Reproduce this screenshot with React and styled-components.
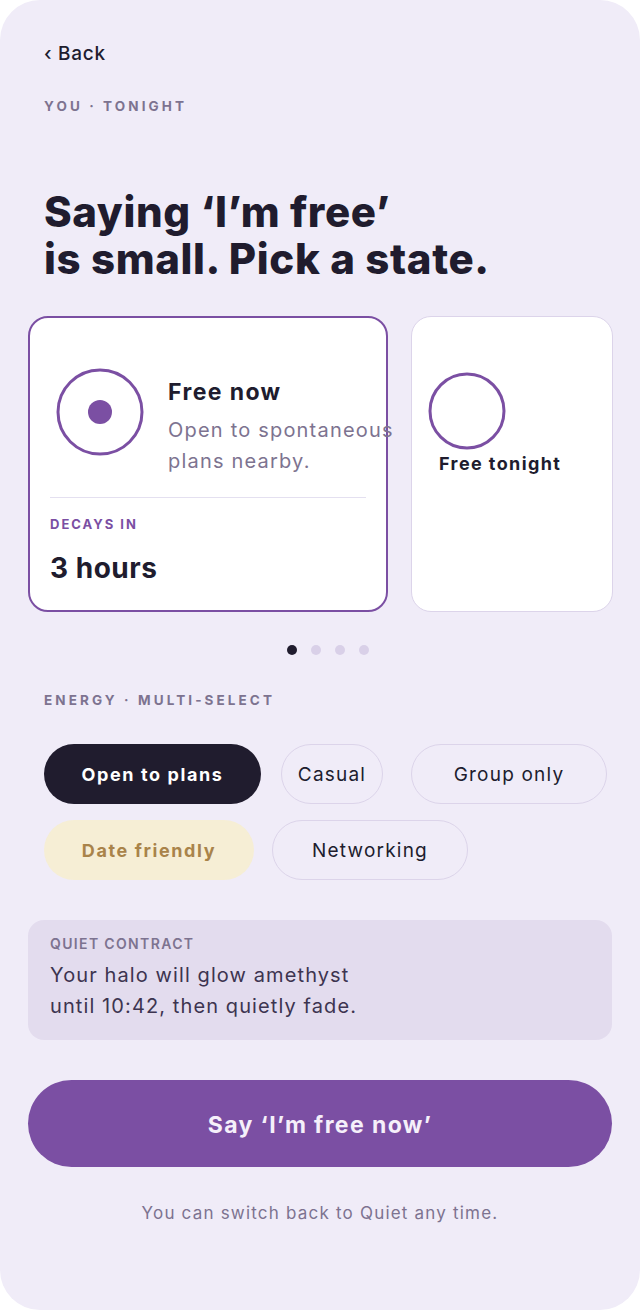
import React from 'react'
import styled, { createGlobalStyle } from 'styled-components'

const GlobalStyle = createGlobalStyle`
  body {
    margin: 0;
    background: #ffffff;
    font-family: Inter, "Noto Sans", sans-serif;
  }
  * { box-sizing: border-box; }
`

const PURPLE = '#7b4fa3'
const INK = '#201c2e'
const MUTED = '#7d7390'
const LINE = '#dcd4ea'

const Screen = styled.div`
  width: 640px;
  min-height: 1310px;
  background: #f0ecf8;
  border-radius: 40px;
  padding: 42px 28px 40px;
  display: flex;
  flex-direction: column;
`

const BackLink = styled.div`
  padding-left: 16px;
  font-size: 19px;
  line-height: 23px;
  font-weight: 500;
  letter-spacing: 0.7px;
  color: ${INK};
`

const Eyebrow = styled.div`
  padding-left: 16px;
  margin-top: ${p => p.$mt || 0}px;
  font-size: 13.5px;
  line-height: 16px;
  font-weight: 700;
  letter-spacing: 3.1px;
  color: ${MUTED};
`

const Heading = styled.h1`
  margin: 74px 0 0;
  padding-left: 16px;
  font-size: 42px;
  line-height: 47px;
  font-weight: 800;
  letter-spacing: 0.6px;
  color: ${INK};
`

const CardRow = styled.div`
  margin-top: 34px;
  display: flex;
  gap: 23px;
  align-items: flex-start;
`

const Card = styled.div`
  flex: none;
  width: ${p => p.$w}px;
  height: 296px;
  background: #ffffff;
  border: ${p => (p.$active ? `2px solid ${PURPLE}` : `1px solid ${LINE}`)};
  border-radius: 20px;
  padding: ${p => p.$pad};
  display: flex;
  flex-direction: column;
`

const TopRow = styled.div`
  height: 148px;
  display: flex;
  align-items: center;
  gap: 18px;
`

const TextCol = styled.div`
  margin-top: 30px;
  white-space: nowrap;
  position: relative;
  z-index: 1;
`

const StateTitle = styled.div`
  font-size: ${p => p.$size}px;
  line-height: ${p => p.$size + 6}px;
  font-weight: 700;
  letter-spacing: ${p => p.$ls}px;
  color: ${INK};
  margin-left: ${p => p.$ml || 0}px;
  margin-top: ${p => p.$mt || 0}px;
  white-space: nowrap;
`

const StateDesc = styled.div`
  margin-top: 8px;
  font-size: 20px;
  line-height: 31px;
  letter-spacing: 1.2px;
  color: ${MUTED};
`

const Divider = styled.div`
  margin-top: 11px;
  height: 1px;
  background: #e4e0f0;
`

const DecayLabel = styled.div`
  margin-top: 18px;
  font-size: 13px;
  line-height: 16px;
  font-weight: 700;
  letter-spacing: 2px;
  color: ${PURPLE};
`

const DecayValue = styled.div`
  margin-top: 19px;
  font-size: 28px;
  line-height: 34px;
  font-weight: 700;
  letter-spacing: 0.5px;
  color: ${INK};
`

const Dots = styled.div`
  margin-top: 33px;
  display: flex;
  justify-content: center;
  gap: 14px;
  padding-left: 16px;
`

const Dot = styled.span`
  width: 10px;
  height: 10px;
  border-radius: 50%;
  background: ${p => (p.$on ? INK : '#d9d0e8')};
`

const ChipRow = styled.div`
  margin-top: ${p => p.$mt}px;
  padding-left: 16px;
  display: flex;
`

const Chip = styled.div`
  flex: none;
  width: ${p => p.$w}px;
  margin-left: ${p => p.$ml || 0}px;
  height: 60px;
  border-radius: 30px;
  display: flex;
  align-items: center;
  justify-content: center;
  font-size: ${p => (p.$variant === 'plain' ? 19 : 18)}px;
  font-weight: ${p => (p.$variant === 'plain' ? 400 : 700)};
  letter-spacing: ${p => (p.$variant === 'plain' ? 1.2 : 1.6)}px;
  color: ${p => (p.$variant === 'dark' ? '#ffffff' : p.$variant === 'gold' ? '#a9834a' : INK)};
  background: ${p => (p.$variant === 'dark' ? INK : p.$variant === 'gold' ? '#f6eed5' : 'transparent')};
  border: ${p => (p.$variant === 'plain' ? `1px solid ${LINE}` : 'none')};
`

const Contract = styled.div`
  margin-top: 40px;
  background: #e3dcee;
  border-radius: 16px;
  padding: 15px 22px 18px;
`

const ContractLabel = styled.div`
  font-size: 14px;
  line-height: 18px;
  font-weight: 600;
  letter-spacing: 1.35px;
  color: ${MUTED};
`

const ContractText = styled.div`
  margin-top: 7px;
  font-size: 20px;
  line-height: 31px;
  letter-spacing: 1.1px;
  color: #3d3450;
`

const CTA = styled.button`
  margin-top: 40px;
  height: 87px;
  width: 100%;
  border: none;
  border-radius: 44px;
  background: ${PURPLE};
  color: #f5f0fa;
  font-family: inherit;
  font-size: 23px;
  font-weight: 700;
  letter-spacing: 1.4px;
  padding-top: 4px;
`

const Footnote = styled.div`
  margin-top: 34px;
  text-align: center;
  font-size: 17px;
  line-height: 24px;
  letter-spacing: 1.2px;
  color: ${MUTED};
`

function Halo ({ size, r, dot }) {
  const c = size / 2
  return (
    <svg width={size} height={size} viewBox={`0 0 ${size} ${size}`} style={{ flex: 'none' }}>
      <circle cx={c} cy={c} r={r} fill="none" stroke={PURPLE} strokeWidth="3" />
      {dot && <circle cx={c} cy={c} r={dot} fill={PURPLE} />}
    </svg>
  )
}

const chipsTop = [
  { label: 'Open to plans', w: 217, variant: 'dark' },
  { label: 'Casual', w: 102, ml: 20, variant: 'plain' },
  { label: 'Group only', w: 196, ml: 28, variant: 'plain' }
]

const chipsBottom = [
  { label: 'Date friendly', w: 210, variant: 'gold' },
  { label: 'Networking', w: 196, ml: 18, variant: 'plain' }
]

export default function App () {
  return (
    <>
      <GlobalStyle />
      <Screen>
        <BackLink>‹ Back</BackLink>
        <Eyebrow $mt={33}>YOU · TONIGHT</Eyebrow>
        <Heading>
          Saying ‘I’m free’
          <br />
          is small. Pick a state.
        </Heading>

        <CardRow>
          <Card $w={360} $active $pad="20px">
            <TopRow>
              <Halo size={100} r={42} dot={12} />
              <TextCol>
                <StateTitle $size={23} $ls={1.4}>Free now</StateTitle>
                <StateDesc>
                  Open to spontaneous
                  <br />
                  plans nearby.
                </StateDesc>
              </TextCol>
            </TopRow>
            <Divider />
            <DecayLabel>DECAYS IN</DecayLabel>
            <DecayValue>3 hours</DecayValue>
          </Card>
          <Card $w={202} $pad="54px 15px">
            <Halo size={80} r={37} />
            <StateTitle $size={18} $ls={1.4} $ml={12} $mt={1}>Free tonight</StateTitle>
          </Card>
        </CardRow>

        <Dots>
          <Dot $on />
          <Dot />
          <Dot />
          <Dot />
        </Dots>

        <Eyebrow $mt={37}>ENERGY · MULTI-SELECT</Eyebrow>

        <ChipRow $mt={36}>
          {chipsTop.map(c => (
            <Chip key={c.label} $w={c.w} $ml={c.ml} $variant={c.variant}>{c.label}</Chip>
          ))}
        </ChipRow>
        <ChipRow $mt={16}>
          {chipsBottom.map(c => (
            <Chip key={c.label} $w={c.w} $ml={c.ml} $variant={c.variant}>{c.label}</Chip>
          ))}
        </ChipRow>

        <Contract>
          <ContractLabel>QUIET CONTRACT</ContractLabel>
          <ContractText>
            Your halo will glow amethyst
            <br />
            until 10:42, then quietly fade.
          </ContractText>
        </Contract>

        <CTA>Say ‘I’m free now’</CTA>
        <Footnote>You can switch back to Quiet any time.</Footnote>
      </Screen>
    </>
  )
}
